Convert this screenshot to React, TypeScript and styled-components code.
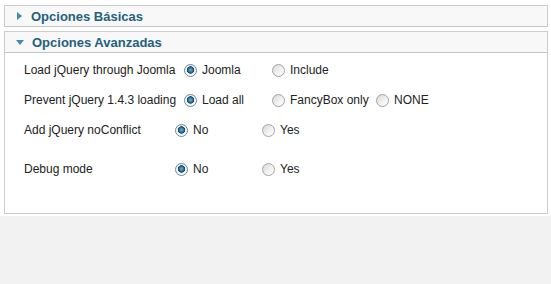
import styled, { createGlobalStyle } from "styled-components";

const GlobalStyle = createGlobalStyle`
  html, body {
    margin: 0;
    padding: 0;
    background: #f2f2f2;
    font-family: "Liberation Sans", Arial, sans-serif;
  }
`;

type RowType = {
  label: string
  labelWidth: number
  options: { text: string; width: number }[]
  checked: number
  spaceBefore?: number
}

const rows: RowType[] = [
  {
    label: "Load jQuery through Joomla",
    labelWidth: 160,
    options: [{ text: "Joomla", width: 88 }, { text: "Include", width: 88 }],
    checked: 0,
  },
  {
    label: "Prevent jQuery 1.4.3 loading",
    labelWidth: 160,
    options: [
      { text: "Load all", width: 88 },
      { text: "FancyBox only", width: 104 },
      { text: "NONE", width: 88 },
    ],
    checked: 0,
  },
  {
    label: "Add jQuery noConflict",
    labelWidth: 151,
    options: [{ text: "No", width: 87 }, { text: "Yes", width: 87 }],
    checked: 0,
  },
  {
    label: "Debug mode",
    labelWidth: 151,
    options: [{ text: "No", width: 87 }, { text: "Yes", width: 87 }],
    checked: 0,
    spaceBefore: 9,
  },
];

export default function App() {
  return (
    <>
      <GlobalStyle />
      <Page>
        <Header>
          <Arrow viewBox="0 0 8 10">
            <path d="M1 1 L6 5 L1 9 Z" />
          </Arrow>
          Opciones Básicas
        </Header>
        <Header $open>
          <Arrow viewBox="0 0 10 8">
            <path d="M1 2 L9 2 L5 7 Z" />
          </Arrow>
          Opciones Avanzadas
        </Header>
        <Panel>
          {rows.map((row) => (
            <Row key={row.label} $space={row.spaceBefore ?? 0}>
              <Label $width={row.labelWidth}>{row.label}</Label>
              {row.options.map((opt, i) => (
                <Option key={opt.text} $width={opt.width}>
                  <Radio $checked={i === row.checked} />
                  {opt.text}
                </Option>
              ))}
            </Row>
          ))}
        </Panel>
      </Page>
    </>
  );
}

const Page = styled.div`
  background: #fff;
  padding: 5px 3px 2px 4px;
  display: flex;
  flex-direction: column;
  gap: 4px;
`

const Header = styled.div<{ $open?: boolean }>`
  height: 20px;
  display: flex;
  align-items: center;
  gap: 7px;
  padding-left: ${(p) => (p.$open ? "10px" : "11px")};
  background: #f8f8f8;
  border: 1px solid #cccccc;
  border-bottom-color: #c4c4c4;
  font-size: 13px;
  font-weight: bold;
  color: #245f80;
  ${(p) => p.$open && "margin-bottom: -4px;"}
`

const Arrow = styled.svg`
  width: ${(p) => (p.viewBox === "0 0 8 10" ? "8px" : "10px")};
  height: ${(p) => (p.viewBox === "0 0 8 10" ? "10px" : "8px")};
  fill: #3a8bb6;
  flex-shrink: 0;
`

const Panel = styled.div`
  border: 1px solid #cccccc;
  border-top: none;
  padding: 2px 0 29px 19px;
  display: flex;
  flex-direction: column;
  font-size: 12px;
  color: #222;
`

const Row = styled.div<{ $space: number }>`
  height: 30px;
  display: flex;
  align-items: center;
  margin-top: ${(p) => p.$space}px;
`

const Label = styled.div<{ $width: number }>`
  width: ${(p) => p.$width}px;
  white-space: nowrap;
`

const Option = styled.label`
  width: ${(p: { $width: number }) => p.$width}px;
  display: flex;
  align-items: center;
  gap: 5px;
  white-space: nowrap;
`

const Radio = styled.span<{ $checked: boolean }>`
  width: 11px;
  height: 11px;
  border-radius: 50%;
  border: 1px solid ${(p) => (p.$checked ? "#6f8798" : "#a3a3a3")};
  background: ${(p) =>
    p.$checked
      ? "radial-gradient(circle at 50% 45%, #6fb2d4 0, #2b6b8e 2.5px, #17425c 3.4px, #e8eef2 4px, #ffffff 6px)"
      : "linear-gradient(135deg, #d6d6d6 0%, #f4f4f4 60%, #ffffff 100%)"};
  flex-shrink: 0;
`
